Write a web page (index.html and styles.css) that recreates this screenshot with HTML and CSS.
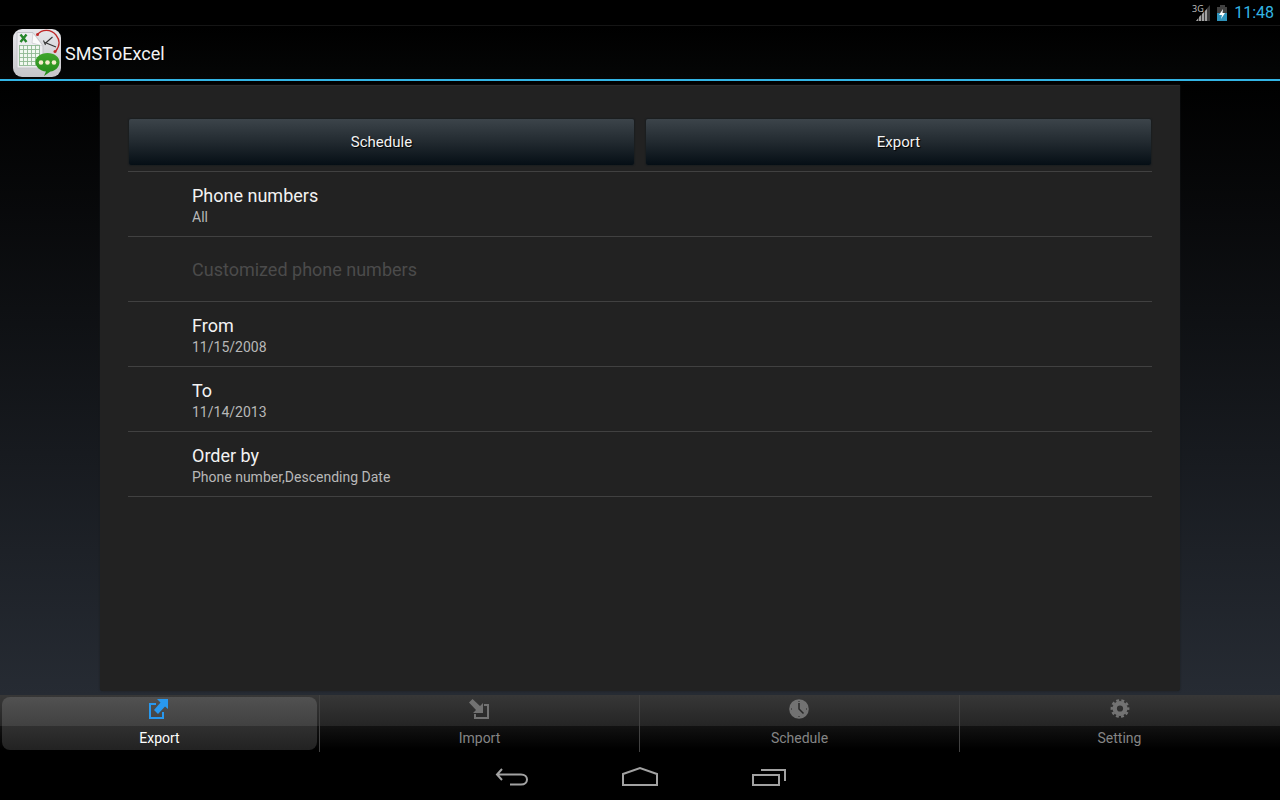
FILE: index.html
```html
<!DOCTYPE html>
<html lang="en">
<head>
<meta charset="utf-8">
<title>SMSToExcel</title>
<link rel="stylesheet" href="styles.css">
</head>
<body>
<div class="status">
  <svg width="20" height="20" viewBox="0 0 20 20" aria-hidden="true">
    <path d="M18 2V18H4z" fill="#3c3c3c"/>
    <path d="M4 18l2-2.500V18zM7 18v-4l2-2v6zM10 18v-7l2-2v9zM13 18V8l2-2v12z" fill="#a2a2a2"/>
    <text x="0" y="9" class="net">3G</text>
  </svg>
  <svg width="12" height="18" viewBox="0 0 12 18" aria-hidden="true">
    <path d="M3 1h5v2h2v6H0V3h3z" fill="#414141"/>
    <path d="M0 9h10v8H0z" fill="#2f93bb"/>
    <path d="M6 5L2 11h3l-1 4 4-6H5.500z" fill="#fff"/>
  </svg>
  <span class="clock">11:48</span>
</div>
<header class="bar">
  <svg width="48" height="48" viewBox="0 0 48 48" aria-hidden="true">
    <defs>
      <linearGradient id="tile" x1="0" y1="0" x2="0" y2="1"><stop offset="0" stop-color="#e6e6ea"/><stop offset="1" stop-color="#c6c6ca"/></linearGradient>
      <linearGradient id="bubble" x1="0" y1="0" x2="0" y2="1"><stop offset="0" stop-color="#3fa52c"/><stop offset="1" stop-color="#238a18"/></linearGradient>
    </defs>
    <rect width="48" height="48" rx="9" fill="url(#tile)"/>
    <path d="M4 3.500h16l10 13V39H4z" fill="#ededf0" stroke="#c4c4c9"/>
    <path d="M20 4l-1 10 11 3z" fill="#fbfbfb" stroke="#c4c4c9" stroke-width=".6"/>
    <path d="M6 16h21v20H6z" fill="#f1f8f1"/>
    <path d="M6 16.500h21M6 20.500h21M6 24.500h21M6 28.500h21M6 32.500h21M6 36.500h21M6.500 16v20M10.500 16v20M14.500 16v20M18.500 16v20M22.500 16v20M26.500 16v20" stroke="#8fb892" stroke-width=".9" fill="none"/>
    <path d="M7.500 5.500l6 7.500M13.500 5.500l-6 7.500" stroke="#26862a" stroke-width="2.400"/>
    <path d="M24.500 5.500C29 0 38 0 43 6c4 5 4 11-.5 16.500" fill="none" stroke="#bf2828" stroke-width="1.300"/>
    <circle cx="24.500" cy="5.500" r="1.500" fill="#bf2828"/><circle cx="42" cy="22.500" r="1.500" fill="#bf2828"/>
    <path d="M31.500 15l8-7M32 13.500l11 4.500M30.500 11.500l2 4.500" stroke="#333" stroke-width="1.100" fill="none"/>
    <path d="M34.500 24c7 0 12 4 12 9s-4 9-9 9.500L31 47l2-4.500c-6-.5-10.500-4.500-10.500-9.500s5-9 12-9z" fill="url(#bubble)"/>
    <g fill="#f5edcb"><circle cx="28" cy="33.500" r="2.300"/><circle cx="34.500" cy="33.500" r="2.300"/><circle cx="41" cy="33.500" r="2.300"/></g>
  </svg>
  <h1 class="title">SMSToExcel</h1>
</header>
<main class="content">
  <section class="panel">
    <div class="actions">
      <button class="action" type="button">Schedule</button>
      <button class="action" type="button">Export</button>
    </div>
    <ul class="prefs">
      <li class="pref"><span class="name">Phone numbers</span><span class="value">All</span></li>
      <li class="pref disabled"><span class="name">Customized phone numbers</span></li>
      <li class="pref"><span class="name">From</span><span class="value">11/15/2008</span></li>
      <li class="pref"><span class="name">To</span><span class="value">11/14/2013</span></li>
      <li class="pref"><span class="name">Order by</span><span class="value">Phone number,Descending Date</span></li>
    </ul>
  </section>
</main>
<nav class="tabs">
  <button class="tab selected" type="button"><span class="face">
    <svg width="21" height="20" viewBox="1 0 21 20" fill="#2898ee" aria-hidden="true"><path d="M9 0h11v10l-3-2.500L10 15l-4-4 6.500-7.500z"/><path d="M1 4h7v2H3v12h11v-5h2v7H1z"/></svg>
    <span>Export</span>
  </span></button>
  <button class="tab" type="button"><span class="face">
    <svg width="21" height="20" viewBox="0 0 21 20" fill="#727272" aria-hidden="true"><path d="M3.500 0l7.500 7L14 4v10H4l3-3L0 3.500z"/><path d="M15 5h5v15H5v-5h2v3h11V7h-3z"/></svg>
    <span>Import</span>
  </span></button>
  <button class="tab" type="button"><span class="face">
    <svg width="21" height="20" viewBox="0 0 21 20" aria-hidden="true"><circle cx="10" cy="10" r="9.800" fill="#727272"/><path d="M10 4v6l4.500 4.500" fill="none" stroke="#292929" stroke-width="1.500"/><path d="M9.500 2h1v1h-1zM9.500 17h1v1h-1zM2 9.500h1v1H2zM17 9.500h1v1h-1z" fill="#292929"/></svg>
    <span>Schedule</span>
  </span></button>
  <button class="tab" type="button"><span class="face">
    <svg width="21" height="20" viewBox="-1 0 21 20" aria-hidden="true"><circle cx="10" cy="9.500" r="5.300" fill="none" stroke="#727272" stroke-width="4.400"/><circle cx="10" cy="9.500" r="8.200" fill="none" stroke="#727272" stroke-width="2.400" stroke-dasharray="2.900 2.252" stroke-dashoffset="1.450"/></svg>
    <span>Setting</span>
  </span></button>
</nav>
<footer class="system">
  <button class="key" type="button" aria-label="Back"><svg width="36" height="24" viewBox="0 0 36 24"><path d="M8 4L3 9.500 8 15M3 9.500h24c8 0 8 10 0 10H16"/></svg></button>
  <button class="key" type="button" aria-label="Home"><svg width="36" height="24" viewBox="0 0 36 24"><path d="M1 9l17-6 17 6v11H1z"/></svg></button>
  <button class="key" type="button" aria-label="Recent apps"><svg width="36" height="24" viewBox="0 0 36 24"><path d="M3 10h26v10H3zM11 5h24v11"/></svg></button>
</footer>
</body>
</html>
```
FILE: styles.css
```css
* { box-sizing: border-box; }
body {
  margin: 0;
  min-height: 100vh;
  display: flex;
  flex-direction: column;
  background: #000;
  color: #f3f3f3;
  font-family: Roboto, "Liberation Sans", sans-serif;
}
button {
  border: 0;
  margin: 0;
  padding: 0;
  font: inherit;
  color: inherit;
  background: none;
}
svg { display: block; flex: none; }
.status {
  height: 26px;
  display: flex;
  align-items: center;
  justify-content: flex-end;
  gap: 5px;
  padding-right: 6px;
  border-bottom: 1px solid #151515;
}
.net { font: 9px "Open Sans", sans-serif; fill: #c5c5c5; }
.clock { font-size: 16px; line-height: 20px; color: #33b5e5; }
.bar {
  height: 55px;
  display: flex;
  align-items: center;
  gap: 4px;
  padding: 1px 13px 0;
  background: linear-gradient(#000, #050606);
  border-bottom: 2px solid #33b5e5;
}
.title { margin: 0; padding-top: 2px; font-size: 18px; line-height: 24px; font-weight: 400; }
.content {
  flex: 1;
  display: flex;
  padding: 4px 100px;
  background: linear-gradient(#000, #262b33);
}
.panel {
  flex: 1;
  padding: 33px 28px;
  background: #222;
  border-top: 1px solid #2b2b2b;
  border-radius: 0 0 3px 3px;
  box-shadow: 0 0 2px #1a1c1f;
}
.actions { display: flex; gap: 12px; padding: 0 1px 6px; }
.action {
  flex: 1;
  height: 46px;
  border-radius: 2px;
  background: linear-gradient(#3c444a, #222a30 50%, #050e15);
  box-shadow: 0 0 1px 1px #1b1e20;
  font-size: 15px;
  text-shadow: 1px 1px 1px #000;
}
.prefs { list-style: none; margin: 0; padding: 0; border-top: 1px solid #414141; }
.pref {
  height: 65px;
  display: flex;
  flex-direction: column;
  justify-content: center;
  padding: 2px 64px 0;
  border-bottom: 1px solid #414141;
}
.name { font-size: 18px; line-height: 24px; }
.value { font-size: 14px; line-height: 18px; color: #b8b8b8; }
.disabled .name { color: #4b4b4b; }
.tabs {
  display: grid;
  grid-template-columns: repeat(4, 1fr);
  height: 57px;
  background: linear-gradient(#373737, #252525 31px, #121212 31px, #000 54px);
}
.tab {
  display: flex;
  padding: 2px;
  font-size: 14px;
  line-height: 20px;
  color: #858585;
  border-right: 1px solid #414141;
}
.tab:last-child { border-right-color: transparent; }
.face {
  flex: 1;
  height: 53px;
  display: flex;
  flex-direction: column;
  align-items: center;
  gap: 9px;
  padding-top: 2px;
  border-radius: 8px;
}
.selected { color: #fff; }
.selected .face { background: linear-gradient(#515151, #414141 29px, #303030 29px, #222); }
.system {
  height: 48px;
  display: flex;
  justify-content: center;
  align-items: center;
  gap: 92px;
  padding-top: 2px;
}
.key svg { fill: none; stroke: #a2a2a2; stroke-width: 2; }
```
